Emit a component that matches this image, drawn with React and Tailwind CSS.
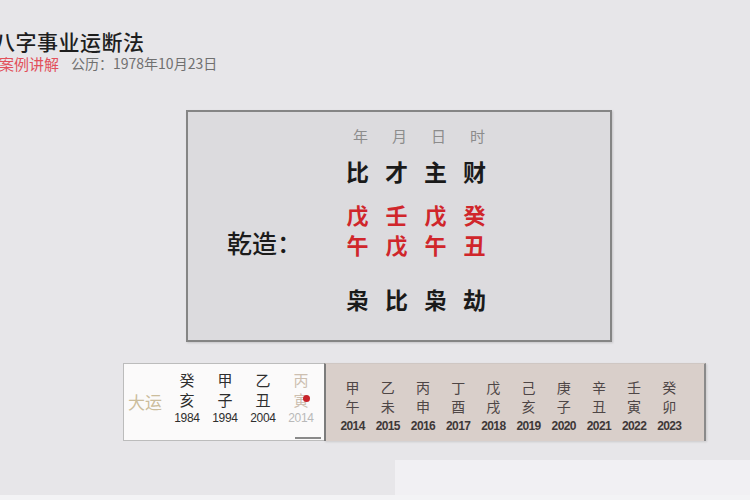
import React from "react";

// 八字事业运断法 · 案例讲解 slide
const CJK = "font-['Noto_Sans_CJK_SC','Noto_Sans',sans-serif]";

const pillars = {
  head: ["年", "月", "日", "时"],
  top: ["比", "才", "主", "财"],
  stem: ["戊", "壬", "戊", "癸"],
  branch: ["午", "戊", "午", "丑"],
  bottom: ["枭", "比", "枭", "劫"],
};

const dayun = [
  { s: "癸", b: "亥", y: "1984" },
  { s: "甲", b: "子", y: "1994" },
  { s: "乙", b: "丑", y: "2004" },
];

const liunian = [
  ["甲", "午", "2014"],
  ["乙", "未", "2015"],
  ["丙", "申", "2016"],
  ["丁", "酉", "2017"],
  ["戊", "戌", "2018"],
  ["己", "亥", "2019"],
  ["庚", "子", "2020"],
  ["辛", "丑", "2021"],
  ["壬", "寅", "2022"],
  ["癸", "卯", "2023"],
];

const Row = ({ chars, className }) => (
  <div className={`grid grid-cols-[repeat(4,39px)] ${className}`}>
    {chars.map((c, i) => (
      <div key={i} className="flex items-center justify-center">
        {c}
      </div>
    ))}
  </div>
);

export default function App() {
  return (
    <div
      className={`w-[750px] h-[500px] overflow-hidden bg-[#e7e6e9] flex flex-col ${CJK}`}
    >
      {/* header */}
      <div className="pt-[30px]">
        <div className="-ml-[6px] h-[22px] leading-[22px] text-[21px] font-medium text-[#1e1e1e] tracking-[0.5px]">
          八字事业运断法
        </div>
        <div className="mt-[3px] h-[16px] flex items-center">
          <span className="-ml-[1px] text-[15px] leading-none text-[#e2505a]">
            案例讲解
          </span>
          <span className="ml-[12px] text-[14px] leading-none text-[#707070]">
            公历：1978年10月23日
          </span>
        </div>
      </div>

      {/* chart box */}
      <div className="mt-[39px] ml-[186px] w-[426px] h-[232px] border-2 border-[#858585] bg-[#dcdbde] shadow-[1px_1px_2px_rgba(0,0,0,0.15)] flex">
        <div className="w-[39px]" />
        <div className="w-[111px] flex flex-col">
          <div className="h-[116px]" />
          <div className="h-[30px] flex items-center text-[25px] font-medium text-[#1b1b1b]">
            乾造：
          </div>
        </div>
        <div className="flex flex-col pt-[13px]">
          <Row
            chars={pillars.head}
            className="h-[20px] text-[15px] text-[#8c8c8c] pl-[3px]"
          />
          <Row
            chars={pillars.top}
            className="mt-[9px] h-[28px] text-[23px] font-bold text-[#1a1a1a]"
          />
          <Row
            chars={pillars.stem}
            className="mt-[16px] h-[30px] text-[22px] font-bold text-[#d0262b]"
          />
          <Row
            chars={pillars.branch}
            className="h-[30px] text-[22px] font-bold text-[#d0262b]"
          />
          <Row
            chars={pillars.bottom}
            className="mt-[24px] h-[30px] text-[23px] font-bold text-[#1a1a1a]"
          />
        </div>
      </div>

      {/* 大运 / 流年 bar */}
      <div className="mt-[21px] ml-[123px] flex h-[78px]">
        <div className="relative w-[201px] bg-[#fbfafa] border border-r-0 border-[#bcbcbc] flex">
          <div className="w-[44px] pl-[4px] flex items-center text-[17px] text-[#cbbd9c]">
            大运
          </div>
          {dayun.map((d) => (
            <div key={d.y} className="w-[38px] flex flex-col items-center pt-[6px] text-[#2e2e2e]">
              <div className="h-[20px] flex items-center text-[15px]">{d.s}</div>
              <div className="h-[20px] flex items-center text-[15px]">{d.b}</div>
              <div className="h-[16px] flex items-center text-[12px] font-['Liberation_Sans',sans-serif] tracking-[-0.3px]">
                {d.y}
              </div>
            </div>
          ))}
          <div className="relative w-[38px] flex flex-col items-center pt-[6px] text-[#cdbfb0]">
            <div className="h-[20px] flex items-center text-[15px]">丙</div>
            <div className="h-[20px] flex items-center text-[15px]">寅</div>
            <div className="h-[16px] flex items-center text-[12px] font-['Liberation_Sans',sans-serif] tracking-[-0.3px] text-[#b9b9b9]">
              2014
            </div>
            <span className="absolute left-[21px] top-[31px] w-[7px] h-[7px] rounded-full bg-[#c8232a]" />
          </div>
          <span className="absolute left-[171px] top-[73px] w-[26px] h-[2px] bg-[#8a8a8a]" />
        </div>
        <div className="w-[382px] bg-[#d9cfca] border-l-2 border-r-2 border-l-[#7c7c7c] border-r-[#8a8a8a] border-t border-t-[#cfc7c3] pl-[9px] pt-[14px] flex shadow-[1px_1px_2px_rgba(0,0,0,0.12)]">
          {liunian.map(([s, b, y]) => (
            <div key={y} className="w-[35.2px] flex flex-col items-center text-[#4e4646]">
              <div className="h-[19px] flex items-center text-[14px]">{s}</div>
              <div className="h-[19px] flex items-center text-[14px]">{b}</div>
              <div className="h-[20px] flex items-center text-[12px] font-bold font-['Liberation_Sans',sans-serif] tracking-[-0.6px] text-[#3e3838]">
                {y}
              </div>
            </div>
          ))}
        </div>
      </div>

      {/* subtitle strip */}
      <div className="mt-[19px] ml-[395px] h-[35px] bg-[#f1f0f3]" />
      <div className="flex-1 bg-[#f3f3f5]" />
    </div>
  );
}
